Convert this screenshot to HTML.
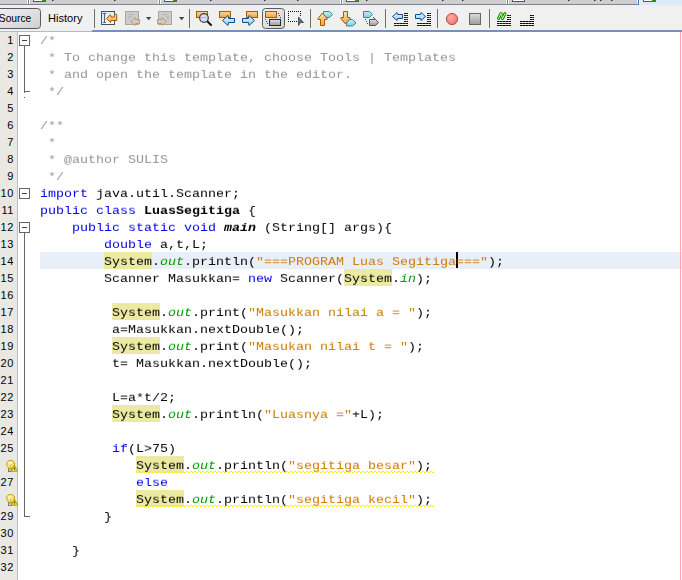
<!DOCTYPE html>
<html><head><meta charset="utf-8"><title>LuasSegitiga.java</title>
<style>
html,body{margin:0;padding:0;}
body{width:682px;height:580px;overflow:hidden;background:#fff;position:relative;font-family:"Liberation Sans","DejaVu Sans",sans-serif;}
#top{position:absolute;left:0;top:0;display:block;z-index:5}
#ed{position:absolute;left:0;top:32px;width:682px;height:548px;background:#fff;overflow:hidden}
#gut{position:absolute;left:0;top:0;width:17px;height:548px;background:#e9e8e2;border-right:1px solid #bdbdbd;}
.ln{position:absolute;left:0;width:20px;height:17px;font-size:11px;line-height:17px;color:#000;white-space:nowrap}
.ln span{position:absolute;right:6.2px;top:0;letter-spacing:0.5px}
.bulb{position:absolute;left:0px;top:0px;z-index:3}
.row{position:absolute;left:40px;height:17px;line-height:19px;white-space:pre;font-family:"Liberation Mono","DejaVu Sans Mono",monospace;font-size:13.3333px;color:#000;}
.t{display:inline-block;transform:matrix3d(1,0,0,0, 0,0.9,0,0, 0,0,1,0, 0,0,0,1);transform-origin:0 13px;will-change:transform}
.cur{position:absolute;left:40px;width:642px;height:17px;background:#e9eff8}
.c{color:#969696}
.k{color:#0000e6}
.s{color:#ce7b00}
.f{color:#009900;font-style:italic}
.m{position:absolute;height:17px;background:#ece9a2}
.w{position:absolute;height:2px;background:
  repeating-linear-gradient(90deg,transparent 0 2px,#fff000 2px 4px) 0 0/4px 1px repeat-x,
  repeating-linear-gradient(90deg,#fff000 0 2px,transparent 2px 4px) 0 1px/4px 1px repeat-x;}
.caret{position:absolute;width:2px;height:16px;background:#000}
.fb{position:absolute;left:19px;width:9px;height:9px;border:1px solid #666;background:#fff}
.fb:after{content:"";position:absolute;left:2px;top:4px;width:5px;height:1px;background:#444}
.fv{position:absolute;left:24px;width:1px;background:#666}
.fh{position:absolute;left:24px;width:6px;height:1px;background:#666}
#rm{position:absolute;left:680px;top:0;width:1px;height:548px;background:#ffa6a6;z-index:2}
</style></head><body>
<svg width="0" height="0" style="position:absolute"><defs><radialGradient id="gY" cx="0.4" cy="0.35" r="0.7"><stop offset="0" stop-color="#fffdea"/><stop offset="0.5" stop-color="#f9e77a"/><stop offset="1" stop-color="#e9c22e"/></radialGradient></defs></svg>
<svg id="top" width="682" height="32" viewBox="0 0 682 32">
<defs>
<linearGradient id="gO" x1="0" y1="0" x2="0" y2="1"><stop offset="0" stop-color="#fbd9a3"/><stop offset="1" stop-color="#f0a23c"/></linearGradient>
<linearGradient id="gB" x1="0" y1="0" x2="0" y2="1"><stop offset="0" stop-color="#eaf4ff"/><stop offset="1" stop-color="#9cc8f2"/></linearGradient>
<linearGradient id="gA" x1="0" y1="0" x2="0" y2="1"><stop offset="0" stop-color="#fde0b0"/><stop offset="1" stop-color="#eda64a"/></linearGradient>
<linearGradient id="gG" x1="0" y1="0" x2="0" y2="1"><stop offset="0" stop-color="#dedede"/><stop offset="1" stop-color="#9a9a9a"/></linearGradient>
<linearGradient id="gBtn" x1="0" y1="0" x2="1" y2="1"><stop offset="0" stop-color="#f2f2f2"/><stop offset="1" stop-color="#d0d0d0"/></linearGradient>
<linearGradient id="gC" x1="0" y1="0" x2="0" y2="1"><stop offset="0" stop-color="#c6eef6"/><stop offset="1" stop-color="#7fd0e2"/></linearGradient>
<radialGradient id="gR" cx="0.4" cy="0.35" r="0.7"><stop offset="0" stop-color="#ffb0a8"/><stop offset="1" stop-color="#f86c66"/></radialGradient>
<linearGradient id="gDoc" x1="0" y1="0" x2="1" y2="1"><stop offset="0" stop-color="#c9e0f8"/><stop offset="1" stop-color="#ffffff"/></linearGradient>
</defs>
<rect x="0" y="0" width="682" height="32" fill="#f0f0f0"/>
<rect x="0" y="0" width="640" height="4" fill="#cecece"/>
<rect x="27" y="0" width="3" height="4" fill="#ffffff"/><rect x="28" y="0" width="1" height="4" fill="#7b8494"/>
<rect x="158" y="0" width="3" height="4" fill="#ffffff"/><rect x="159" y="0" width="1" height="4" fill="#7b8494"/>
<rect x="340" y="0" width="3" height="4" fill="#ffffff"/><rect x="341" y="0" width="1" height="4" fill="#7b8494"/>
<rect x="506" y="0" width="3" height="4" fill="#ffffff"/><rect x="507" y="0" width="1" height="4" fill="#7b8494"/>
<rect x="0" y="4" width="639" height="1" fill="#7d8592"/>
<rect x="637" y="0" width="1" height="4" fill="#f4f4f4"/>
<rect x="638" y="0" width="1" height="5" fill="#3c78b8"/>
<rect x="639" y="0" width="1" height="5" fill="#f4f8fc"/>
<rect x="640" y="0" width="42" height="5" fill="#dcebf6"/>
<rect x="33.5" y="-6" width="12" height="7.500" fill="#fff" stroke="#4c5766" stroke-width="1"/><rect x="42" y="0" width="3.500" height="2" fill="#3c8c14"/>
<rect x="164.5" y="-6" width="12" height="7.500" fill="#fff" stroke="#4c5766" stroke-width="1"/><rect x="173" y="0" width="3.500" height="2" fill="#3c8c14"/>
<rect x="346.5" y="-6" width="12" height="7.500" fill="#fff" stroke="#4c5766" stroke-width="1"/><rect x="355" y="0" width="3.500" height="2" fill="#3c8c14"/>
<rect x="643.5" y="-6" width="12" height="7.500" fill="#fff" stroke="#4c5766" stroke-width="1"/><rect x="652" y="0" width="3.500" height="2" fill="#3c8c14"/>
<rect x="512.5" y="-6" width="12" height="7.500" fill="#fff" stroke="#4c5766" stroke-width="1"/>
<rect x="52" y="0" width="1.400" height="1" fill="#1c1c30"/>
<rect x="114" y="0" width="1.400" height="1" fill="#1c1c30"/>
<rect x="210" y="0" width="1.400" height="1" fill="#1c1c30"/>
<rect x="264" y="0" width="1.400" height="1" fill="#1c1c30"/>
<rect x="297" y="0" width="1.400" height="1" fill="#1c1c30"/>
<rect x="366" y="0" width="1.400" height="1" fill="#1c1c30"/>
<rect x="442" y="0" width="1.400" height="1" fill="#1c1c30"/>
<rect x="462" y="0" width="1.400" height="1" fill="#1c1c30"/>
<rect x="568" y="0" width="1.400" height="1" fill="#1c1c30"/>
<rect x="594" y="0" width="1.400" height="1" fill="#1c1c30"/>
<rect x="600" y="0" width="1.400" height="1" fill="#1c1c30"/>
<rect x="611" y="0" width="1.400" height="1" fill="#1c1c30"/>
<rect x="0" y="31" width="92" height="1" fill="#a9bdd6"/>
<rect x="92" y="30" width="590" height="2" fill="#7193ba"/>
<rect x="-6.500" y="8.500" width="47" height="20" rx="3" fill="url(#gBtn)" stroke="#5a5a5a"/>
<text x="-1.200" y="22" font-family="'Liberation Sans','DejaVu Sans',sans-serif" font-size="11" fill="#000" textLength="32.500" lengthAdjust="spacingAndGlyphs">Source</text>
<text x="48" y="22" font-family="'Liberation Sans','DejaVu Sans',sans-serif" font-size="11" fill="#000" textLength="34.500" lengthAdjust="spacingAndGlyphs">History</text>
<rect x="94" y="9" width="1" height="19" fill="#6e6e6e"/>
<rect x="189" y="9" width="1" height="19" fill="#6e6e6e"/>
<rect x="310" y="9" width="1" height="19" fill="#6e6e6e"/>
<rect x="385" y="9" width="1" height="19" fill="#6e6e6e"/>
<rect x="437" y="9" width="1" height="19" fill="#6e6e6e"/>
<rect x="489" y="9" width="1" height="19" fill="#6e6e6e"/>
<rect x="101.500" y="11.500" width="13" height="13" fill="url(#gDoc)" stroke="#46525f"/>
<path d="M103 13.500h3M103 22.500h3M104.500 13.500v9" stroke="#56606c" fill="none"/>
<path d="M106.500 18.500 L110.500 14.800 L111 17 H114.300 V14.300 H116.700 V20.500 H111 L110.500 22.500 Z" fill="url(#gA)" stroke="#a85a00" stroke-linejoin="round"/>
<rect x="125.500" y="11.500" width="13" height="13" fill="#cdcdcd" stroke="#a6a6a6"/>
<path d="M128 14.500h6M128 16.500h4M128 18.500h2" stroke="#b4b4b4" fill="none"/>
<path d="M130.500 21.500 L135 17.500 L135.500 19.500 H139.500 V23.500 H135.500 L135 25.500 Z" fill="#d6c9b6" stroke="#ad9c80" stroke-linejoin="round"/>
<path d="M146 17 h5.400 l-2.700 3.300 z" fill="#3a4656"/>
<rect x="158.500" y="11.500" width="13" height="13" fill="#cdcdcd" stroke="#a6a6a6"/>
<path d="M162 14.500h6M166 16.500h3M167 18.500h2" stroke="#b4b4b4" fill="none"/>
<path d="M166.500 21.500 L162 17.500 L161.500 19.500 H157.500 V23.500 H161.500 L162 25.500 Z" fill="#d6c9b6" stroke="#ad9c80" stroke-linejoin="round"/>
<path d="M179 17 h5.400 l-2.700 3.300 z" fill="#3a4656"/>
<rect x="196.5" y="11.5" width="11" height="6" fill="url(#gO)" stroke="#a85a00"/>
<path d="M207 21 L211 25" stroke="#1a1a1a" stroke-width="2.200" stroke-linecap="round"/>
<circle cx="204" cy="18" r="4.300" fill="#cfe0f2" stroke="#3a3f46" stroke-width="1.200"/>
<rect x="201.500" y="17" width="5" height="1" fill="#a9b9c9"/>
<rect x="219.5" y="11.5" width="11" height="6" fill="url(#gO)" stroke="#a85a00"/>
<path d="M222.5 20.5 L228 15.5 L228.5 18.5 H234.5 V22.5 H228.5 L228 25.5 Z" fill="url(#gB)" stroke="#0a4f8c" stroke-linejoin="round"/>
<rect x="246.5" y="11.5" width="11" height="6" fill="url(#gO)" stroke="#a85a00"/>
<path d="M254.5 20.5 L249 15.5 L248.5 18.5 H242.5 V22.5 H248.5 L249 25.5 Z" fill="url(#gB)" stroke="#0a4f8c" stroke-linejoin="round"/>
<rect x="262.500" y="8.500" width="22" height="20" rx="3" fill="url(#gBtn)" stroke="#5a5a5a"/>
<rect x="265.5" y="11.5" width="11" height="6" fill="url(#gO)" stroke="#a85a00"/>
<rect x="269.500" y="19.500" width="11" height="6" fill="url(#gG)" stroke="#2e2e2e"/>
<rect x="278" y="13" width="1" height="1" fill="#444"/><rect x="279" y="15" width="1" height="1" fill="#444"/><rect x="280" y="17" width="1" height="1" fill="#444"/><rect x="265" y="19" width="1" height="1" fill="#444"/><rect x="266" y="21" width="1" height="1" fill="#444"/><rect x="267" y="23" width="1" height="1" fill="#444"/>
<rect x="288" y="11" width="1" height="1" fill="#111"/><rect x="290" y="11" width="1" height="1" fill="#111"/><rect x="292" y="11" width="1" height="1" fill="#111"/><rect x="294" y="11" width="1" height="1" fill="#111"/><rect x="296" y="11" width="1" height="1" fill="#111"/><rect x="298" y="11" width="1" height="1" fill="#111"/><rect x="300" y="11" width="1" height="1" fill="#111"/><rect x="288" y="21" width="1" height="1" fill="#111"/><rect x="290" y="21" width="1" height="1" fill="#111"/><rect x="292" y="21" width="1" height="1" fill="#111"/><rect x="294" y="21" width="1" height="1" fill="#111"/><rect x="296" y="21" width="1" height="1" fill="#111"/><rect x="288" y="13" width="1" height="1" fill="#111"/><rect x="288" y="15" width="1" height="1" fill="#111"/><rect x="288" y="17" width="1" height="1" fill="#111"/><rect x="288" y="19" width="1" height="1" fill="#111"/><rect x="300" y="13" width="1" height="1" fill="#111"/><rect x="300" y="15" width="1" height="1" fill="#111"/>
<path d="M298.500 17 L303.500 22.500 L300.500 22.500 L298.500 25.500 Z" fill="#5b6b7b" stroke="#34404e" stroke-width="0.800" stroke-linejoin="round"/>
<path d="M323.5 11.5 H329.5 L332.5 14.5 L329.5 17.5 H323.5 Z" fill="url(#gC)" stroke="#3d8696" stroke-linejoin="round"/>
<path d="M322.500 13 L317.500 19 L318 19.500 H320.500 V25.500 H324.500 V19.500 H327 L327.500 19 Z" fill="url(#gA)" stroke="#a85a00" stroke-linejoin="round"/>
<path d="M343.500 11.500 H347.500 V17.500 H350 L350.500 18 L345.500 24 L340.500 18 L341 17.500 H343.500 Z" fill="url(#gA)" stroke="#a85a00" stroke-linejoin="round"/>
<path d="M349.500 19.500 H352.500 L356 23 L352.500 26 H346.500 L346.500 23 Z" fill="url(#gC)" stroke="#3d8696" stroke-linejoin="round"/>
<path d="M363.5 11.5 H369.5 L372.5 14.5 L369.5 17.5 H363.5 Z" fill="url(#gC)" stroke="#3d8696" stroke-linejoin="round"/>
<path d="M369.5 19.5 H375.5 L378.5 22.5 L375.5 25.5 H369.5 Z" fill="url(#gG)" stroke="#555" stroke-linejoin="round"/>
<rect x="365" y="19" width="1" height="1" fill="#444"/><rect x="366" y="21" width="1" height="1" fill="#444"/><rect x="367" y="23" width="1" height="1" fill="#444"/><rect x="373" y="17" width="1" height="1" fill="#444"/><rect x="374" y="18" width="1" height="1" fill="#444"/>
<path d="M392.500 16.500 L397 12.500 L397.500 14.500 H402.500 V18.500 H397.500 L397 20.500 Z" fill="url(#gB)" stroke="#0a4f8c" stroke-linejoin="round"/>
<rect x="404" y="13" width="4" height="1" fill="#4a4a4a"/><path d="M404 13.5 H408" stroke="#111" stroke-dasharray="2 1" shape-rendering="crispEdges"/><rect x="404" y="15" width="4" height="1" fill="#4a4a4a"/><path d="M404 15.5 H408" stroke="#111" stroke-dasharray="2 1" shape-rendering="crispEdges"/><rect x="404" y="17" width="4" height="1" fill="#4a4a4a"/><path d="M404 17.5 H408" stroke="#111" stroke-dasharray="2 1" shape-rendering="crispEdges"/><rect x="404" y="19" width="4" height="1" fill="#4a4a4a"/><path d="M404 19.5 H408" stroke="#111" stroke-dasharray="2 1" shape-rendering="crispEdges"/><rect x="404" y="21" width="4" height="1" fill="#4a4a4a"/><path d="M404 21.5 H408" stroke="#111" stroke-dasharray="2 1" shape-rendering="crispEdges"/>
<rect x="394" y="23" width="14" height="1" fill="#4a4a4a"/><path d="M394 23.5 H408" stroke="#111" stroke-dasharray="2 1" shape-rendering="crispEdges"/><rect x="394" y="25" width="14" height="1" fill="#4a4a4a"/><path d="M394 25.5 H408" stroke="#111" stroke-dasharray="2 1" shape-rendering="crispEdges"/>
<path d="M425.500 16.500 L421 12.500 L420.500 14.500 H415.500 V18.500 H420.500 L421 20.500 Z" fill="url(#gB)" stroke="#0a4f8c" stroke-linejoin="round"/>
<rect x="427" y="13" width="4" height="1" fill="#4a4a4a"/><path d="M427 13.5 H431" stroke="#111" stroke-dasharray="2 1" shape-rendering="crispEdges"/><rect x="427" y="15" width="4" height="1" fill="#4a4a4a"/><path d="M427 15.5 H431" stroke="#111" stroke-dasharray="2 1" shape-rendering="crispEdges"/><rect x="427" y="17" width="4" height="1" fill="#4a4a4a"/><path d="M427 17.5 H431" stroke="#111" stroke-dasharray="2 1" shape-rendering="crispEdges"/><rect x="427" y="19" width="4" height="1" fill="#4a4a4a"/><path d="M427 19.5 H431" stroke="#111" stroke-dasharray="2 1" shape-rendering="crispEdges"/><rect x="427" y="21" width="4" height="1" fill="#4a4a4a"/><path d="M427 21.5 H431" stroke="#111" stroke-dasharray="2 1" shape-rendering="crispEdges"/>
<rect x="417" y="23" width="14" height="1" fill="#4a4a4a"/><path d="M417 23.5 H431" stroke="#111" stroke-dasharray="2 1" shape-rendering="crispEdges"/><rect x="417" y="25" width="14" height="1" fill="#4a4a4a"/><path d="M417 25.5 H431" stroke="#111" stroke-dasharray="2 1" shape-rendering="crispEdges"/>
<circle cx="452" cy="19" r="5.600" fill="url(#gR)" stroke="#a8483e" stroke-width="0.900"/>
<rect x="469.500" y="13.500" width="11" height="11" fill="url(#gG)" stroke="#666666"/>
<path d="M498.500 18.500 L501 13.500 M502.500 18.500 L505 13.500 M501 13.500 L502.500 18.500" stroke="#1f8f00" stroke-width="3" stroke-linecap="round" fill="none"/>
<path d="M498.500 18.500 L501 13.500 M502.500 18.500 L505 13.500 M501 13.500 L502.500 18.500" stroke="#d8f8c0" stroke-width="0.900" stroke-linecap="round" fill="none"/>
<rect x="507" y="15" width="4" height="1" fill="#4a4a4a"/><path d="M507 15.5 H511" stroke="#111" stroke-dasharray="2 1" shape-rendering="crispEdges"/><rect x="507" y="17" width="4" height="1" fill="#4a4a4a"/><path d="M507 17.5 H511" stroke="#111" stroke-dasharray="2 1" shape-rendering="crispEdges"/><rect x="507" y="19" width="4" height="1" fill="#4a4a4a"/><path d="M507 19.5 H511" stroke="#111" stroke-dasharray="2 1" shape-rendering="crispEdges"/>
<rect x="497" y="21" width="14" height="1" fill="#4a4a4a"/><path d="M497 21.5 H511" stroke="#111" stroke-dasharray="2 1" shape-rendering="crispEdges"/><rect x="497" y="23" width="14" height="1" fill="#4a4a4a"/><path d="M497 23.5 H511" stroke="#111" stroke-dasharray="2 1" shape-rendering="crispEdges"/><rect x="497" y="25" width="14" height="1" fill="#4a4a4a"/><path d="M497 25.5 H511" stroke="#111" stroke-dasharray="2 1" shape-rendering="crispEdges"/>
<rect x="530" y="15" width="4" height="1" fill="#4a4a4a"/><path d="M530 15.5 H534" stroke="#000" stroke-dasharray="2 1" shape-rendering="crispEdges"/><rect x="530" y="17" width="4" height="1" fill="#4a4a4a"/><path d="M530 17.5 H534" stroke="#000" stroke-dasharray="2 1" shape-rendering="crispEdges"/><rect x="530" y="19" width="4" height="1" fill="#4a4a4a"/><path d="M530 19.5 H534" stroke="#000" stroke-dasharray="2 1" shape-rendering="crispEdges"/>
<rect x="520" y="21" width="14" height="1" fill="#4a4a4a"/><path d="M520 21.5 H534" stroke="#000" stroke-dasharray="2 1" shape-rendering="crispEdges"/><rect x="520" y="23" width="14" height="1" fill="#4a4a4a"/><path d="M520 23.5 H534" stroke="#000" stroke-dasharray="2 1" shape-rendering="crispEdges"/><rect x="520" y="25" width="14" height="1" fill="#4a4a4a"/><path d="M520 25.5 H534" stroke="#000" stroke-dasharray="2 1" shape-rendering="crispEdges"/>
</svg>
<div id="ed">
<div id="gut"></div>
<div class="ln" style="top:0px"><span>1</span></div><div class="ln" style="top:17px"><span>2</span></div><div class="ln" style="top:34px"><span>3</span></div><div class="ln" style="top:51px"><span>4</span></div><div class="ln" style="top:68px"><span>5</span></div><div class="ln" style="top:85px"><span>6</span></div><div class="ln" style="top:102px"><span>7</span></div><div class="ln" style="top:119px"><span>8</span></div><div class="ln" style="top:136px"><span>9</span></div><div class="ln" style="top:153px"><span>10</span></div><div class="ln" style="top:170px"><span>11</span></div><div class="ln" style="top:187px"><span>12</span></div><div class="ln" style="top:204px"><span>13</span></div><div class="ln" style="top:221px"><span>14</span></div><div class="ln" style="top:238px"><span>15</span></div><div class="ln" style="top:255px"><span>16</span></div><div class="ln" style="top:272px"><span>17</span></div><div class="ln" style="top:289px"><span>18</span></div><div class="ln" style="top:306px"><span>19</span></div><div class="ln" style="top:323px"><span>20</span></div><div class="ln" style="top:340px"><span>21</span></div><div class="ln" style="top:357px"><span>22</span></div><div class="ln" style="top:374px"><span>23</span></div><div class="ln" style="top:391px"><span>24</span></div><div class="ln" style="top:408px"><span>25</span></div><div class="ln" style="top:425px"><svg class="bulb" width="20" height="17" viewBox="0 0 20 17"><rect x="8.500" y="11.800" width="2.700" height="2.600" fill="#e4e9f2" stroke="#4e5e80" stroke-width="0.800"/><path d="M10.600 3.400c-2.400 0-4 1.700-4 3.800 0 1.300 0.800 2.200 1.500 3 0.400 0.500 0.600 0.900 0.600 1.500h3.800c0-0.600 0.200-1 0.600-1.500 0.700-0.800 1.500-1.700 1.500-3 0-2.100-1.600-3.800-4-3.800z" fill="url(#gY)" stroke="#c39e12" stroke-width="1"/><path d="M9.200 6.800l1.400 1.400 1.400-1.400M10.600 8.200v3" fill="none" stroke="#d2ae2e" stroke-width="0.700"/><path d="M14.700 8.600l3 5.700h-6z" fill="#fff02a" stroke="#ad9000" stroke-width="0.800" stroke-linejoin="round"/><rect x="14.200" y="10.700" width="1" height="1.700" fill="#111"/><rect x="14.300" y="12.900" width="0.800" height="0.700" fill="#333"/></svg></div><div class="ln" style="top:442px"><span>27</span></div><div class="ln" style="top:459px"><svg class="bulb" width="20" height="17" viewBox="0 0 20 17"><rect x="8.500" y="11.800" width="2.700" height="2.600" fill="#e4e9f2" stroke="#4e5e80" stroke-width="0.800"/><path d="M10.600 3.400c-2.400 0-4 1.700-4 3.800 0 1.300 0.800 2.200 1.500 3 0.400 0.500 0.600 0.900 0.600 1.500h3.800c0-0.600 0.200-1 0.600-1.500 0.700-0.800 1.500-1.700 1.500-3 0-2.100-1.600-3.800-4-3.800z" fill="url(#gY)" stroke="#c39e12" stroke-width="1"/><path d="M9.200 6.800l1.400 1.400 1.400-1.400M10.600 8.200v3" fill="none" stroke="#d2ae2e" stroke-width="0.700"/><path d="M14.700 8.600l3 5.700h-6z" fill="#fff02a" stroke="#ad9000" stroke-width="0.800" stroke-linejoin="round"/><rect x="14.200" y="10.700" width="1" height="1.700" fill="#111"/><rect x="14.300" y="12.900" width="0.800" height="0.700" fill="#333"/></svg></div><div class="ln" style="top:476px"><span>29</span></div><div class="ln" style="top:493px"><span>30</span></div><div class="ln" style="top:510px"><span>31</span></div><div class="ln" style="top:527px"><span>32</span></div>

<div class="fb" style="top:3px"></div>
<div class="fv" style="top:14px;height:47px"></div>
<div class="fh" style="top:59px"></div>
<div class="fv" style="top:65px;height:1px"></div>
<div class="fb" style="top:156px"></div>
<div class="fb" style="top:190px"></div>
<div class="fv" style="top:201px;height:284px"></div>
<div class="fh" style="top:484px"></div>

<div class="cur" style="top:220px"></div><div class="m" style="top:220px;left:104px;width:48px"></div><div class="m" style="top:237px;left:344px;width:48px"></div><div class="m" style="top:271px;left:112px;width:48px"></div><div class="m" style="top:305px;left:112px;width:48px"></div><div class="m" style="top:373px;left:112px;width:48px"></div><div class="m" style="top:424px;left:136px;width:48px"></div><div class="w" style="top:439px;left:136px;width:298px"></div><div class="m" style="top:458px;left:136px;width:48px"></div><div class="w" style="top:473px;left:136px;width:298px"></div><div class="caret" style="top:220px;left:456px"></div>
<div class="row" style="top:-1px"><span class="t"><span class="c">/*</span></span></div><div class="row" style="top:16px"><span class="t"><span class="c"> * To change this template, choose Tools | Templates</span></span></div><div class="row" style="top:33px"><span class="t"><span class="c"> * and open the template in the editor.</span></span></div><div class="row" style="top:50px"><span class="t"><span class="c"> */</span></span></div><div class="row" style="top:84px"><span class="t"><span class="c">/**</span></span></div><div class="row" style="top:101px"><span class="t"><span class="c"> *</span></span></div><div class="row" style="top:118px"><span class="t"><span class="c"> * @author SULIS</span></span></div><div class="row" style="top:135px"><span class="t"><span class="c"> */</span></span></div><div class="row" style="top:152px"><span class="t"><span class="k">import</span> java.util.Scanner;</span></div><div class="row" style="top:169px"><span class="t"><span class="k">public</span> <span class="k">class</span> <b>LuasSegitiga</b> {</span></div><div class="row" style="top:186px"><span class="t">    <span class="k">public</span> <span class="k">static</span> <span class="k">void</span> <b><i>main</i></b> (String[] args){</span></div><div class="row" style="top:203px"><span class="t">        <span class="k">double</span> a,t,L;</span></div><div class="row" style="top:220px"><span class="t">        System.<span class="f">out</span>.println(<span class="s">"===PROGRAM Luas Segitiga==="</span>);</span></div><div class="row" style="top:237px"><span class="t">        Scanner Masukkan= <span class="k">new</span> Scanner(System.<span class="f">in</span>);</span></div><div class="row" style="top:271px"><span class="t">         System.<span class="f">out</span>.print(<span class="s">"Masukkan nilai a = "</span>);</span></div><div class="row" style="top:288px"><span class="t">         a=Masukkan.nextDouble();</span></div><div class="row" style="top:305px"><span class="t">         System.<span class="f">out</span>.print(<span class="s">"Masukan nilai t = "</span>);</span></div><div class="row" style="top:322px"><span class="t">         t= Masukkan.nextDouble();</span></div><div class="row" style="top:356px"><span class="t">         L=a*t/2;</span></div><div class="row" style="top:373px"><span class="t">         System.<span class="f">out</span>.println(<span class="s">"Luasnya ="</span>+L);</span></div><div class="row" style="top:407px"><span class="t">         <span class="k">if</span>(L&gt;75)</span></div><div class="row" style="top:424px"><span class="t">            System.<span class="f">out</span>.println(<span class="s">"segitiga besar"</span>);</span></div><div class="row" style="top:441px"><span class="t">            <span class="k">else</span></span></div><div class="row" style="top:458px"><span class="t">            System.<span class="f">out</span>.println(<span class="s">"segitiga kecil"</span>);</span></div><div class="row" style="top:475px"><span class="t">        }</span></div><div class="row" style="top:509px"><span class="t">    }</span></div>
<div id="rm"></div>
</div>
</body></html>
